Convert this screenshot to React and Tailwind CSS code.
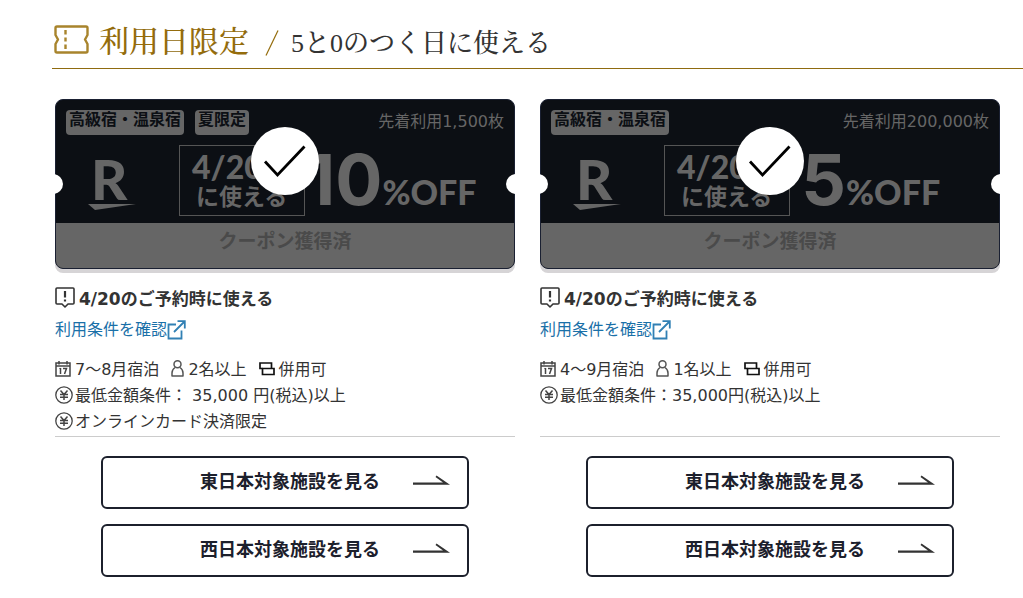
const coupons = [
  {
    id: 'coupon-10',
    tags: ['高級宿・温泉宿', '夏限定'],
    limit: '先着利用1,500枚',
    discount: '10',
    stay: '7〜8月宿泊',
    guests: '2名以上',
    conditions: ['最低金額条件： 35,000 円(税込)以上', 'オンラインカード決済限定'],
  },
  {
    id: 'coupon-5',
    tags: ['高級宿・温泉宿'],
    limit: '先着利用200,000枚',
    discount: '5',
    stay: '4〜9月宿泊',
    guests: '1名以上',
    conditions: ['最低金額条件：35,000円(税込)以上'],
  },
];

const areas = ['東日本対象施設を見る', '西日本対象施設を見る'];

function TicketIcon() {
  return (
    <svg width="35" height="29" viewBox="0 0 35 29" fill="none" stroke="#a8842c" strokeWidth="2.400" className="shrink-0">
      <path d="M3 1.500H32Q33.500 1.500 33.500 3V10L31 14.500L33.500 19V26Q33.500 27.500 32 27.500H3Q1.500 27.500 1.500 26V19L4 14.500L1.500 10V3Q1.500 1.500 3 1.500Z" strokeLinejoin="round" />
      <path d="M11.500 5V9.500M11.500 12.500V16.500M11.500 19.500V24" />
    </svg>
  );
}

function NoticeIcon() {
  return (
    <svg width="20" height="21" viewBox="0 0 20 21" fill="none" stroke="#333" strokeWidth="1.600" className="mb-[3px] shrink-0">
      <path d="M2 1H18Q19 1 19 2V16Q19 17 18 17H13L10 20L7 17H2Q1 17 1 16V2Q1 1 2 1Z" strokeLinejoin="round" />
      <path d="M10 4V10.500M10 12.500V14.500" strokeWidth="2.200" />
    </svg>
  );
}

function ExternalIcon() {
  return (
    <svg width="19" height="20" viewBox="0 0 19 20" fill="none" stroke="#3180b4" strokeWidth="1.800" className="shrink-0">
      <path d="M9 4.500H1.500V18.500H14.500V10.500" />
      <path d="M7 12L17.500 1.500M10.500 1.200H17.800V8.500" />
    </svg>
  );
}

function CalendarIcon() {
  return (
    <svg width="16" height="16" viewBox="0 0 16 16" fill="none" stroke="#444" strokeWidth="1.500" className="mb-[3px] shrink-0">
      <path d="M1 2H15V15H1ZM1 5H15M4 0V3.500M12 0V3.500" />
      <path d="M5.500 7V13M4.500 8L5.500 7.300M8 7.500H11.500L9.500 13" />
    </svg>
  );
}

function PersonIcon() {
  return (
    <svg width="13" height="17" viewBox="0 0 13 17" fill="none" stroke="#555" strokeWidth="1.500" className="mb-[3px] shrink-0">
      <circle cx="6.500" cy="4.300" r="3.500" />
      <path d="M4 7.500Q1 9.500 1 13V16H12V13Q12 9.500 9 7.500" strokeLinejoin="round" />
    </svg>
  );
}

function CombineIcon() {
  return (
    <svg width="16" height="14" viewBox="0 0 16 14" fill="none" stroke="#111" strokeWidth="1.700" className="mb-[3px] shrink-0">
      <path d="M3.500 6.500H1V1H12.500V6.500" />
      <path d="M3.500 6.500H15V12.500H3.500Z" />
    </svg>
  );
}

function YenIcon() {
  return (
    <svg width="18" height="18" viewBox="0 0 18 18" fill="none" stroke="#444" strokeWidth="1.300" className="mb-[3px] shrink-0">
      <circle cx="9" cy="9" r="8.200" />
      <path d="M5.500 4.500L9 8.500L12.500 4.500M9 8.500V14M5 8.500H13M5 11.200H13" strokeWidth="1.500" />
    </svg>
  );
}

function ArrowIcon() {
  return (
    <svg width="37" height="11" viewBox="0 0 37 11" className="shrink-0">
      <path d="M0 7.500H30L22.500 2L23.500 0.500L37 9.800H0Z" fill="#333" />
    </svg>
  );
}

function RakutenLogo() {
  return (
    <svg width="50" height="74" viewBox="0 0 50 74" fill="#666" className="shrink-0">
      <text x="3" y="56" fontSize="56" fontWeight="900" fontFamily="Lato, sans-serif">R</text>
      <path d="M0 60H48L7 66Z" />
    </svg>
  );
}

function CouponTicket({ tags, limit, discount }) {
  return (
    <div className="relative rounded-lg shadow-[0_4px_0_#d6d4d6]">
      <div className="overflow-hidden rounded-lg border border-[#1a2032] bg-[#0c0f14]">
        <div className="h-[123px] px-[10px] pt-[10px]">
          <div className="flex h-[35px] items-start justify-between">
            <ul className="flex gap-[11px]">
              {tags.map((tag) => (
                <li key={tag} className="h-[25px] rounded-sm bg-[#666] px-[3px] text-base leading-[19px] font-bold text-[#0c0f14]">
                  {tag}
                </li>
              ))}
            </ul>
            <p className="text-base leading-6 text-[#666]">{limit}</p>
          </div>
          <div className="flex h-[71px] items-center pl-[22px] text-[#666]">
            <RakutenLogo />
            <div className="ml-[41px] h-[71px] w-[126px] shrink-0 border border-[#555] pt-1 pl-3 font-[Lato,'Noto_Sans_CJK_JP',sans-serif]">
              <p className="text-[32px] leading-[34px] font-black">4/20</p>
              <p className="pl-1 text-[23px] leading-6 font-bold">に使える</p>
            </div>
            <p className="flex items-baseline self-end pb-px leading-none">
              <span className="min-w-14 text-right font-[Inter,sans-serif] text-[70px] leading-none font-bold">{discount}</span>
              <span className="font-[Lato,sans-serif] text-[34px] leading-none font-black">%OFF</span>
            </p>
          </div>
        </div>
        <button type="button" disabled className="block h-[45px] w-full bg-[#666] pb-2 text-[19px] font-bold text-[#4a4a4a]">
          クーポン獲得済
        </button>
      </div>
      {/* ticket notches */}
      <div className="absolute inset-0 overflow-hidden">
        <span className="absolute top-[75px] -left-3 size-5 rounded-full bg-white" />
        <span className="absolute top-[75px] -right-[11px] size-5 rounded-full bg-white" />
      </div>
      <div className="absolute top-7 left-1/2 flex size-[68px] -translate-x-1/2 items-center justify-center rounded-full bg-white">
        <svg width="44" height="34" viewBox="0 0 44 34" fill="none" stroke="#000" strokeWidth="2.800">
          <path d="M2 17.500L14.500 31L41.500 2.500" />
        </svg>
      </div>
    </div>
  );
}

function Coupon({ coupon }) {
  return (
    <article className="flex flex-col">
      <CouponTicket tags={coupon.tags} limit={coupon.limit} discount={coupon.discount} />

      <h3 className="mt-4 flex items-center gap-1 text-[17px] leading-7 font-bold">
        <NoticeIcon />
        4/20のご予約時に使える
      </h3>
      <a href="#conditions" className="mt-[3px] flex items-center self-start text-base leading-7 text-[#1a70a8]">
        利用条件を確認
        <ExternalIcon />
      </a>

      <div className="mt-[13px] grow border-b border-[#ccc] pb-px text-base leading-[26px]">
        <ul className="flex gap-3">
          <li className="flex items-center gap-1"><CalendarIcon />{coupon.stay}</li>
          <li className="flex items-center gap-1"><PersonIcon />{coupon.guests}</li>
          <li className="flex items-center gap-1"><CombineIcon />併用可</li>
        </ul>
        <ul>
          {coupon.conditions.map((text) => (
            <li key={text} className="flex items-center gap-[2px]"><YenIcon />{text}</li>
          ))}
        </ul>
      </div>

      <div className="mt-[19px] flex flex-col items-center gap-[15px]">
        {areas.map((area) => (
          <a
            key={area}
            href={`#${coupon.id}`}
            className="grid h-[53px] w-4/5 grid-cols-[1fr_auto_1fr] items-center rounded-md border-2 border-[#1c202c] pl-[10px] text-lg font-bold text-[#1c202c]"
          >
            <span className="col-start-2 pb-[2px]">{area}</span>
            <span className="justify-self-end pr-[17px] pb-1"><ArrowIcon /></span>
          </a>
        ))}
      </div>
    </article>
  );
}

export default function App() {
  return (
    <section className="bg-white pt-5 pb-5 font-['DejaVu_Sans','Noto_Sans_CJK_JP',sans-serif] text-[#333]">
      <header className="ml-[52px] flex h-[49px] items-start border-b border-[#8f6b10] pl-[2px]">
        <div className="pt-[5px]">
          <TicketIcon />
        </div>
        <h2 className="ml-[10px] flex items-baseline font-['Liberation_Serif','Noto_Serif_CJK_JP','Noto_Sans_CJK_JP',serif] text-[30px] leading-[44px] font-medium text-[#946c0c]">
          利用日限定
          <svg width="14" height="26" viewBox="0 0 14 26" fill="none" stroke="#946c0c" strokeWidth="1.200" className="mr-3 ml-4 self-center">
            <path d="M1 25.500L13 0.500" />
          </svg>
          <span className="text-[26px] text-[#333]">5と0のつく日に使える</span>
        </h2>
      </header>
      <div className="mt-[30px] grid grid-cols-2 gap-[25px] pr-[23px] pl-[55px]">
        {coupons.map((coupon) => (
          <Coupon key={coupon.id} coupon={coupon} />
        ))}
      </div>
    </section>
  );
}
